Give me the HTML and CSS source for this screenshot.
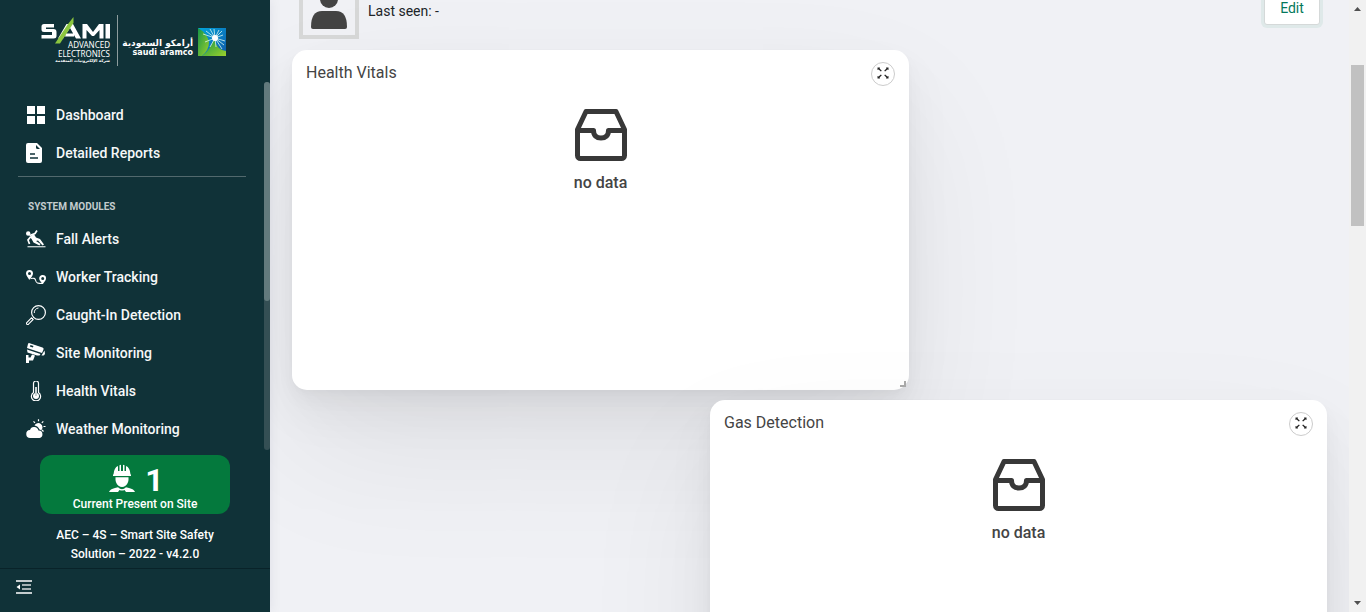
FILE: index.html
```html
<!DOCTYPE html>
<html lang="en">
<head>
<meta charset="utf-8">
<title>Worker Profile</title>
<link rel="stylesheet" href="styles.css">
</head>
<body>
<svg width="0" height="0" class="defs" aria-hidden="true">
  <symbol id="inbox" viewBox="0 0 52 52"><path d="M11 2.500h30l8.500 18v26a3 3 0 0 1-3 3h-41a3 3 0 0 1-3-3v-26zM2.500 21.500h16c0 5 3 7.500 7.500 7.500s7.500-2.500 7.500-7.500h16" fill="none" stroke="#383838" stroke-width="5" stroke-linejoin="round"/></symbol>
  <symbol id="expand" viewBox="0 0 12 12"><path d="M.5.500h2.500L2.600 1.500 4.800 3.700 3.900 4.500 1.600 2.400.5 3zM11.500.5V3l-1.100-.6-2.300 2.100-.9-.8 2.200-2.200L9 .5zM.5 11.500V9l1.100.6 2.300-2.100.9.800-2.200 2.200.4 1zM11.500 11.500H9l.4-1-2.200-2.200.9-.8 2.300 2.100 1.100-.6z" fill="#222"/></symbol>
</svg>
<div class="app">
  <aside class="sidebar">
    <div class="brand">
      <svg width="188" height="54" viewBox="40 13 188 54" role="img" aria-label="SAMI Advanced Electronics and Saudi Aramco">
        <defs>
          <linearGradient id="blue" x1="0" y1="0" x2="1" y2="1"><stop offset="0" stop-color="#02a5dc"/><stop offset="1" stop-color="#1059a8"/></linearGradient>
          <linearGradient id="green" x1="0" y1="0" x2="1" y2="1"><stop offset="0" stop-color="#159447"/><stop offset="1" stop-color="#9bd12c"/></linearGradient>
        </defs>
        <path d="M54 24H44q-2.500 0-2.500 2.500v3q0 2.500 2.500 2.500h8v3H41.500v3.500H53.500q3 0 3-2.500v-4q0-3-3-3H46v-1.500h8z" fill="#fff"/>
        <path d="M58 38.500 66.500 24H73l8 14.500H76L70 28l-7 10.500zM66 33.500h8v3h-9zM82.500 38.500V24H87l6 8 6-8h4.500v14.500h-4V30l-5.500 6h-2l-5.500-6v8.500zM105.500 24h4.500v14.500h-4.500z" fill="#fff"/>
        <path d="M73.500 17v6L60 43.500h-5L68 24z" fill="#8cc63f"/>
        <g fill="#fff" text-anchor="end">
          <text x="110" y="48" class="brand-small">ADVANCED</text>
          <text x="110" y="57" class="brand-small">ELECTRONICS</text>
          <text x="110" y="62" class="brand-tiny">شركة الإلكترونيات المتقدمة</text>
          <text x="193" y="46" class="brand-arabic">أرامكو السعودية</text>
          <text x="193" y="55" class="brand-aramco">saudi aramco</text>
        </g>
        <path d="M117.500 15v51" stroke="#8d9c9d"/>
        <path d="M198 28h28v28h-28z" fill="url(#blue)"/>
        <path d="M198 28q9 5 11 14 0 8-7 14h-4z" fill="url(#green)"/>
        <path d="M202 56q8-6 12-17 3 11 12 12v5z" fill="url(#green)"/>
        <path d="M215 38l-12-4M215 38l-9-7M215 38l-5-9M215 38l-1-9M215 38l4-8M215 38l7-7M215 38l8-3M215 38l10 3M215 38l9 7M215 38l7 11M215 38l1 9M215 38l-5 9M215 38l-10 4" stroke="#d9f5ef" stroke-width=".8"/>
        <circle cx="215" cy="38" r="3" fill="#fff"/>
      </svg>
    </div>
    <div class="menu">
      <nav class="links">
        <a href="#"><svg viewBox="0 0 20 20"><path d="M1 1h8v8H1zM11 1h8v8h-8zM1 11h8v8H1zM11 11h8v8h-8z" fill="#fff"/></svg>Dashboard</a>
        <a href="#"><svg viewBox="0 0 20 20"><path d="M2 0h9l5 5v13a2 2 0 0 1-2 2H2a2 2 0 0 1-2-2V2a2 2 0 0 1 2-2z" fill="#fff"/><path d="M10 2v2.500Q10 6 11.500 6H14z" fill="#103238"/><path d="M4 11h5M4 15h8" stroke="#103238" stroke-width="1.700"/></svg>Detailed Reports</a>
        <hr>
        <h2>SYSTEM MODULES</h2>
        <a href="#"><svg viewBox="0 0 20 20"><circle cx="2.200" cy="4.500" r="2.200" fill="#fff"/><path d="M3.500 6.500 9 4.500 11 1.500M4.500 8 2 11l1.500 4M5 7.500l4 5" fill="none" stroke="#fff" stroke-width="1.700"/><path d="M4 7l4-1.800 2 3.300 4 1.500 4 5.500-1.500 1-4.500-5-2 .5 4.500 3-1 1.500-6-3z" fill="#fff"/><path d="M1.500 17.700h18" stroke="#ced6d7" stroke-width="1.300"/></svg>Fall Alerts</a>
        <a href="#"><svg viewBox="0 0 20 20"><path fill-rule="evenodd" d="M3.500 3a3.500 3.500 0 0 1 3.500 3.500C7 8.500 5 10.500 4 12.500H3C2 10.500 0 8.500 0 6.500A3.500 3.500 0 0 1 3.500 3zm0 2a1.500 1.500 0 1 0 0 3 1.500 1.500 0 0 0 0-3zM16.700 8a3.300 3.300 0 0 1 3.300 3.500c0 2-2 3.500-3 5.500h-.8c-1-2-3-3.500-3-5.500A3.300 3.300 0 0 1 16.700 8zm0 2a1.500 1.500 0 1 0 0 3 1.500 1.500 0 0 0 0-3z" fill="#fff"/><path d="M5 11.500q4-1 4.500 1.500t2 3 5 .5" fill="none" stroke="#fff" stroke-width="1.100"/></svg>Worker Tracking</a>
        <a href="#"><svg viewBox="0 0 20 20" fill="none" stroke="#fff"><circle cx="12.500" cy="7.500" r="6.900" stroke-width="1.200"/><path d="M8.300 8a4.500 4.500 0 0 1 4.200-5M7.500 12.500 6 14" stroke-width="1"/><path d="M5.500 12.800 7.200 14.500 2.500 19.200Q1.500 20 .8 19.200T.8 17.500z" stroke-width="1.100"/></svg>Caught-In Detection</a>
        <a href="#"><svg viewBox="0 0 20 20"><path fill-rule="evenodd" d="M3 0 16.500 4.500Q18 5 17.500 6.500L16 10 1 5 2 1Q2.300 0 3 0zm1.500 2-.7 1.500 3 1 .7-1.500z" fill="#fff"/><path d="M1 6.500 14.500 11l-1 1.500H11L1.500 9.500zM18.500 7.500l-3 5h2q1 0 1.500-2zM9 12.500l-2 5H3V20H0v-8h2.500v2.500h2L6 11.500z" fill="#fff"/></svg>Site Monitoring</a>
        <a href="#"><svg viewBox="0 0 20 20"><path d="M7.500 11.500v-9a2.500 2.500 0 0 1 5 0v9a4.600 4.600 0 1 1-5 0z" fill="none" stroke="#fff" stroke-width="1.200"/><circle cx="10" cy="15" r="3" fill="#fff"/><path d="M10 6v9" stroke="#c9d2d3" stroke-width="2"/></svg>Health Vitals</a>
        <a href="#"><svg viewBox="0 0 20 20"><path d="M4.500 19a4 4 0 0 1-.5-8Q5 7.500 8.500 8q3 0 4 3.500a3.800 3.800 0 0 1 1 7.500z" fill="#fff"/><path d="M8.500 6.500a4.200 4.200 0 1 1 6.500 5q-.7-.8-1.500-1-1.500-3.500-5-4z" fill="#fff"/><path d="M12.500.2v2M17.300 2.300l-1.500 1.500M7.500 2.300 9 3.800M17.500 7.500h2M16 11l1.500 1.500" stroke="#fff" stroke-width="1.200"/></svg>Weather Monitoring</a>
      </nav>
      <div class="menu-track"><div class="menu-thumb"></div></div>
    </div>
    <div class="presence">
      <div class="count"><svg width="26" height="28" viewBox="0 0 26 28"><path d="M4.500 10.500Q5 3.500 9 2v5h1.500V1.300Q11 .8 12 .8V7h2V.8q1 0 1.500.5V7H17V2q4 1.500 4.500 8.500H22V12H4v-1.500zM6.500 13.200h13q.5 6-3 8.500-3.500 2.500-7 0-3.500-2.500-3-8.500zM0 28q1-3 6-4l3-.8q4 4 8 0l3 .8q5 1 6 4h-9l-1.500-2q-2.500 1-5 0L9 28z" fill="#fff"/></svg><strong>1</strong></div>
      <div>Current Present on Site</div>
    </div>
    <p class="version">AEC – 4S – Smart Site Safety Solution – 2022 - v4.2.0</p>
    <div class="collapse">
      <button aria-label="Collapse menu"><svg width="16" height="14" viewBox="0 0 16 14"><path d="M0 1h16M0 13h16" stroke="#fff" stroke-width="1.500"/><path d="M6 5h9M6 9h9" stroke="#d3dadb" stroke-width="1.400"/><path d="M4 4.500v5L.5 7z" fill="#fff"/></svg></button>
    </div>
  </aside>
  <main class="content">
    <header class="profile">
      <div class="avatar"><svg width="36" height="40" viewBox="0 0 36 40"><circle cx="18" cy="9" r="9" fill="#444"/><path d="M0 37q0-16 11-16h14q11 0 11 16 0 2-2 2H2q-2 0-2-2z" fill="#444"/></svg></div>
      <p class="seen">Last seen: -</p>
      <button class="edit">Edit</button>
    </header>
    <div class="widgets">
      <section class="card">
        <div class="card-head"><h3>Health Vitals</h3><button class="expand" aria-label="Expand Health Vitals"><svg width="12" height="12"><use href="#expand"/></svg></button></div>
        <div class="empty"><svg width="52" height="52"><use href="#inbox"/></svg><p>no data</p></div>
        <span class="grip"></span>
      </section>
      <section class="card card-end">
        <div class="card-head"><h3>Gas Detection</h3><button class="expand" aria-label="Expand Gas Detection"><svg width="12" height="12"><use href="#expand"/></svg></button></div>
        <div class="empty"><svg width="52" height="52"><use href="#inbox"/></svg><p>no data</p></div>
        <span class="grip"></span>
      </section>
    </div>
  </main>
  <div class="scrollbar" aria-hidden="true">
    <svg width="7" height="4" viewBox="0 0 7 4"><path d="M0 4 3.500 0 7 4z" fill="#505050"/></svg>
    <div class="scroll-thumb"></div>
    <svg class="down" width="7" height="4" viewBox="0 0 7 4"><path d="M0 0h7L3.500 4z" fill="#505050"/></svg>
  </div>
</div>
</body>
</html>
```
FILE: styles.css
```css
* { box-sizing: border-box; }
body { margin: 0; font-family: Roboto, sans-serif; font-size: 14px; color: #212529; }
h2, h3, p { margin: 0; }
button { font: inherit; cursor: pointer; }
.defs { position: absolute; }
.app { display: flex; height: 100vh; overflow: hidden; background: #f0f1f5; }

.sidebar { display: flex; flex-direction: column; flex: 0 0 270px; background: #103238; color: #fff; box-shadow: 0 0 12px rgba(8, 21, 66, .08); z-index: 1; }
.brand { height: 82px; padding: 13px 40px 0; }
.brand svg { display: block; }
.brand-small { font: 8px "Noto Sans", sans-serif; }
.brand-tiny { font: bold 4px "DejaVu Sans", sans-serif; }
.brand-arabic { font: bold 9px "DejaVu Sans", sans-serif; }
.brand-aramco { font: bold 8px "DejaVu Sans", sans-serif; }
.menu { display: flex; flex: 1; min-height: 0; }
.links { flex: 1; padding: 14px 18px 0; overflow: hidden; }
.links a { display: flex; align-items: center; gap: 10px; height: 38px; padding-left: 8px; color: #f6f8f8; font-weight: 500; text-decoration: none; }
.links svg { width: 20px; height: 20px; }
.links hr { height: 1px; margin: 4px 0 25px; border: 0; background: #52696d; }
.links h2 { height: 18px; padding-left: 10px; color: #c3cccd; font-size: 10px; line-height: 10px; font-weight: 700; }
.menu-track { width: 6px; border-radius: 3px; background: #344f54; }
.menu-thumb { height: 219px; border-radius: 3px; background: #627a7d; }
.presence { margin: 5px 40px 0; height: 59px; padding-top: 9px; border-radius: 12px; background: #04793d; text-align: center; font-size: 12px; line-height: 16px; font-weight: 500; }
.count { display: flex; justify-content: center; gap: 10px; height: 32px; padding-left: 3px; }
.count strong { font-size: 32px; line-height: 32px; }
.version { padding: 12px 50px 4px; text-align: center; font-size: 12px; line-height: 19px; font-weight: 500; }
.collapse { height: 44px; padding: 11px 16px; border-top: 1px solid #092329; }
.collapse button { display: flex; padding: 0; border: 0; background: none; }

.content { flex: 1; min-width: 0; padding: 0 22px; overflow: hidden; }
.profile { display: flex; align-items: flex-end; height: 39px; padding-left: 7px; }
.avatar { display: flex; justify-content: center; align-items: flex-end; width: 60px; height: 60px; padding-bottom: 5px; border: 4px solid #d7d8d8; }
.seen { margin: 0 auto 18px 9px; line-height: 20px; }
.edit { width: 56px; height: 34px; margin: 0 7px 14px 0; padding: 0; border: 1px solid #d5d9d9; border-radius: 3px; background: #fff; color: #04785b; box-shadow: 0 0 0 3px #dfe9e9; }
.widgets { display: flex; flex-direction: column; gap: 10px; margin-top: 11px; }
.card { position: relative; width: calc(60% - 4px); height: 340px; flex: none; padding: 12px 14px; border-radius: 15px; background: #fff; box-shadow: 0 60px 140px rgba(0, 0, 0, .07), 0 24px 50px rgba(0, 0, 0, .05), 0 10px 20px rgba(0, 0, 0, .03), 0 3px 6px rgba(0, 0, 0, .02); }
.card-end { align-self: flex-end; }
.card-head { display: flex; justify-content: space-between; }
.card h3 { color: #444; font-size: 16px; line-height: 22px; font-weight: 400; }
.expand { display: flex; align-items: center; justify-content: center; width: 24px; height: 24px; padding: 0 0 2px; border: 1px solid #ccc; border-radius: 50%; background: #fff; }
.empty { display: flex; flex-direction: column; align-items: center; gap: 11px; margin-top: 23px; color: #444; font-size: 16px; line-height: 22px; font-weight: 500; }
.grip { position: absolute; right: 3px; bottom: 3px; width: 6px; height: 6px; border-right: 2px solid #aaa; border-bottom: 2px solid #aaa; }

.scrollbar { display: flex; flex-direction: column; align-items: center; width: 17px; padding: 7px 0; background: #f1f1f1; }
.scroll-thumb { width: 13px; height: 161px; margin-top: 54px; background: #c1c1c1; }
.down { margin-top: auto; }
```
